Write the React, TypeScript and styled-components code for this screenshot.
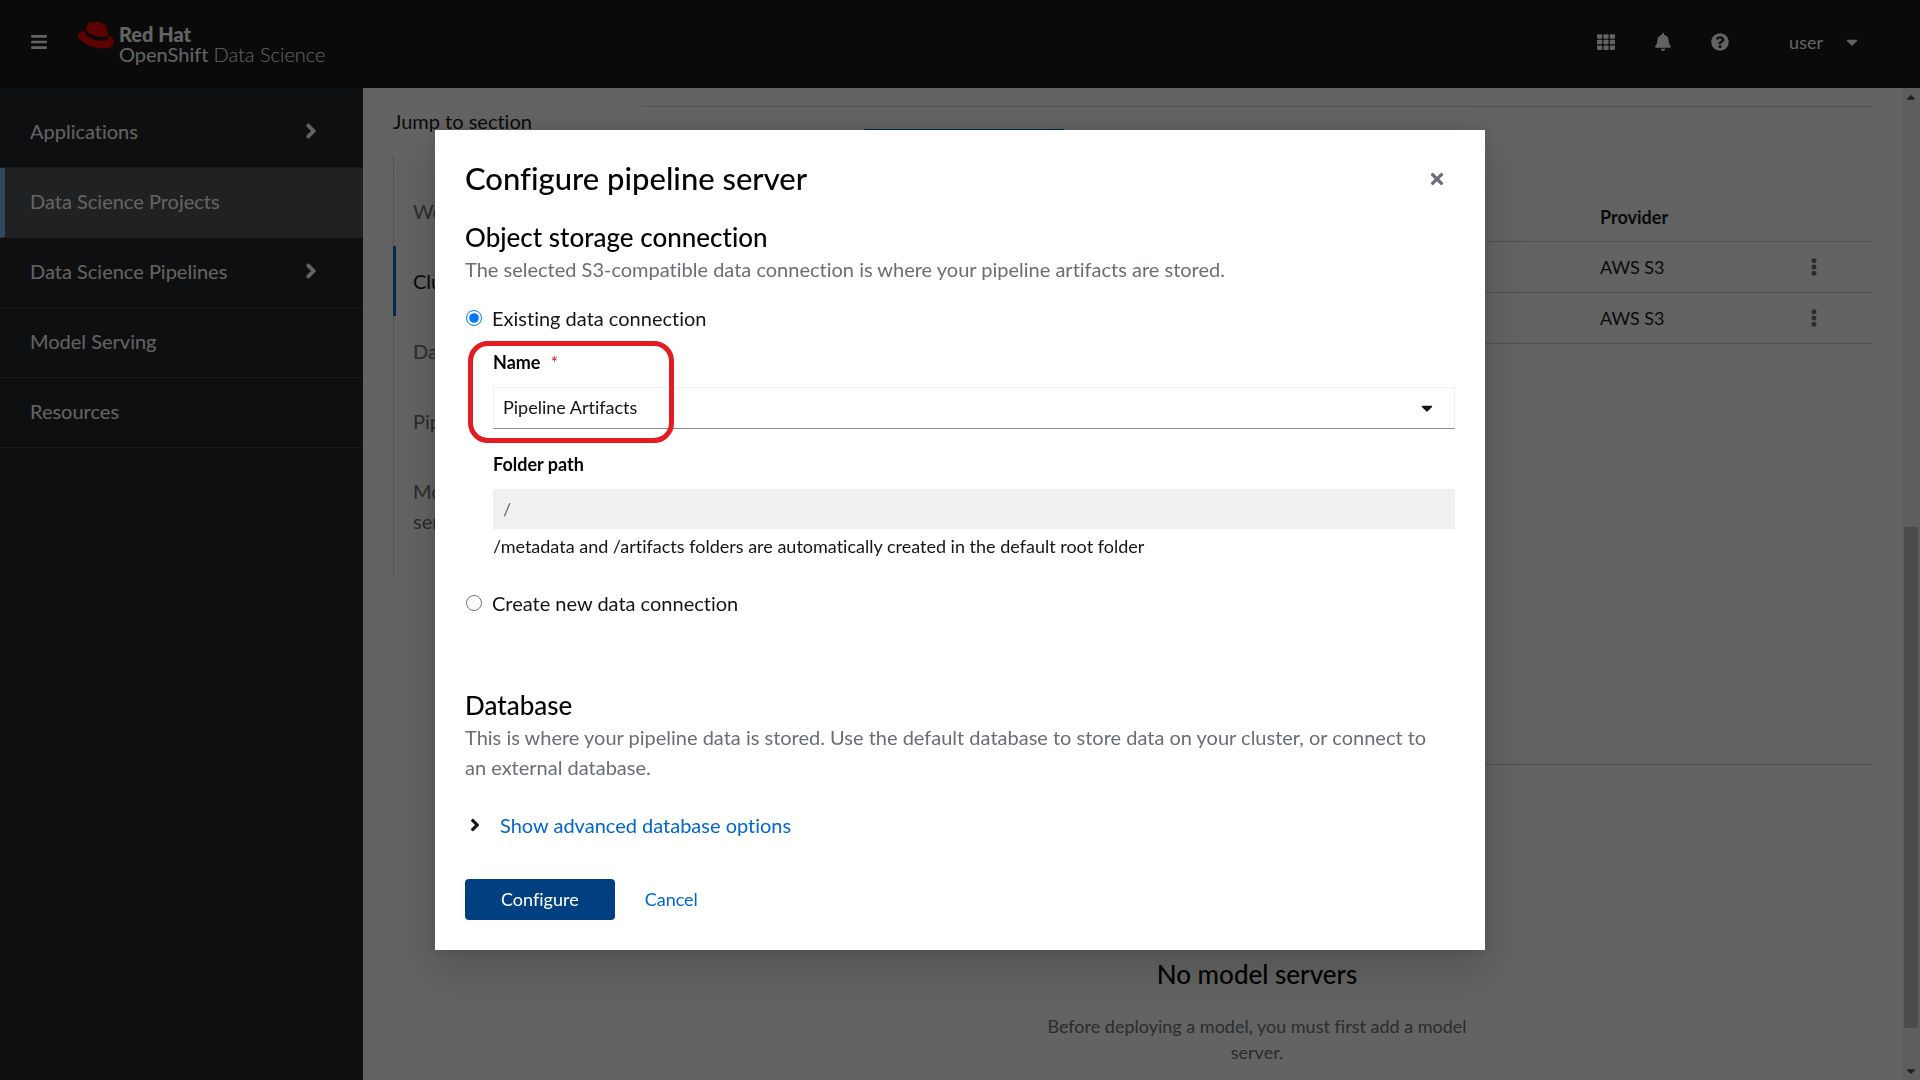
import React, { useState } from "react";
import styled, { createGlobalStyle } from "styled-components";
import {
  FaAngleRight,
  FaBars,
  FaBell,
  FaCaretDown,
  FaCaretUp,
  FaEllipsisV,
  FaQuestionCircle,
  FaRedhat,
  FaTh,
  FaTimes,
} from "react-icons/fa";

const color = {
  text: "#151515",
  heading: "#030303",
  muted: "#6a6e73",
  link: "#0066cc",
  primaryDark: "#004080",
  line: "#d2d2d2",
  masthead: "#151515",
  sidebar: "#212427",
  navLine: "#3c3f42",
  navCurrent: "#4f5255",
  danger: "#c9190b",
};

const GlobalStyle = createGlobalStyle`
  *, *::before, *::after { box-sizing: border-box; }
  body {
    margin: 0;
    overflow: hidden;
    background: #fff;
    color: ${color.text};
    font-family: Lato, "Liberation Sans", sans-serif;
    font-size: 20px;
    line-height: 30px;
    font-variant-ligatures: none;
  }
  h1, h2, h3, p, ul { margin: 0; padding: 0; }
  ul { list-style: none; }
  button, input, select { font: inherit; color: inherit; }
  button { border: 0; background: none; padding: 0; cursor: pointer; }
  svg { display: block; flex: none; }
`;

const Page = styled.div`
  display: flex;
  flex-direction: column;
  height: 100vh;
`;

/* ---------- Masthead ---------- */

const Masthead = styled.header`
  display: flex;
  align-items: center;
  flex: none;
  height: 88px;
  padding: 0 59px 4px 30px;
  background: ${color.masthead};
  color: #fff;
`;

const Brand = styled.a`
  display: flex;
  align-items: center;
  gap: 5px;
  margin-left: 30px;
  color: #fff;
  text-decoration: none;
  line-height: 20px;

  svg {
    color: #ee0000;
    margin-bottom: 15px;
  }
`;

const BrandText = styled.span`
  display: flex;
  flex-direction: column;
  padding-top: 3px;

  strong {
    font-weight: 900;
  }

  span span {
    font-weight: 300;
  }
`;

const Tools = styled.div`
  display: flex;
  align-items: center;
  gap: 39px;
  margin-left: auto;
`;

const UserMenu = styled.button`
  display: flex;
  align-items: center;
  gap: 20px;
  margin-left: 21px;
  font-size: 18px;
`;

/* ---------- Sidebar ---------- */

const Body = styled.div`
  display: flex;
  flex: 1;
  min-height: 0;
`;

const Sidebar = styled.nav`
  flex: none;
  width: 363px;
  padding-top: 10px;
  background: ${color.sidebar};
`;

const NavLink = styled.a<{ $current?: boolean }>`
  display: flex;
  align-items: center;
  justify-content: space-between;
  height: 70px;
  padding: 0 40px 4px ${(p) => (p.$current ? 25 : 30)}px;
  border-left: ${(p) => (p.$current ? "5px solid #73bcf7" : "0")};
  border-bottom: 1px solid ${(p) => (p.$current ? color.navCurrent : color.navLine)};
  background: ${(p) => (p.$current ? color.navCurrent : "transparent")};
  color: #fff;
  text-decoration: none;
`;

/* ---------- Project page ---------- */

const Main = styled.main`
  display: flex;
  flex: 1;
  gap: 30px;
  min-width: 0;
  padding: 18px 30px 0;
  overflow: hidden;
`;

const JumpLinks = styled.nav`
  flex: none;
  width: 219px;
`;

const JumpTitle = styled.div`
  margin-bottom: 20px;
`;

const JumpList = styled.ul`
  padding: 20px 0;
  box-shadow: inset 1px 0 ${color.line};
`;

const JumpLink = styled.a<{ $current?: boolean }>`
  display: block;
  padding: 20px 0 20px 17px;
  border-left: 3px solid ${(p) => (p.$current ? color.link : "transparent")};
  color: ${(p) => (p.$current ? color.text : color.muted)};
  text-decoration: none;
`;

const Sections = styled.div`
  flex: 1;
  min-width: 0;
`;

const Section = styled.section`
  padding-top: 22px;
  border-top: 1px solid ${color.line};
`;

const SectionHeader = styled.div`
  display: grid;
  grid-template-columns: 200px auto 1fr;
  gap: 20px;
  align-items: center;
  margin-bottom: 23px;
`;

const SectionTitle = styled.h2`
  color: ${color.heading};
  font-size: 26px;
  font-weight: 500;
  line-height: 33px;
`;

const Button = styled.button<{ $dark?: boolean }>`
  height: 41px;
  padding: 0 ${(p) => (p.$dark ? 36 : 20)}px 2px;
  border-radius: 4px;
  background: ${(p) => (p.$dark ? color.primaryDark : color.link)};
  color: #fff;
  font-size: 18px;
  line-height: 26px;
  white-space: nowrap;
`;

const DataTable = styled.table`
  width: 100%;
  table-layout: fixed;
  border-collapse: collapse;
  font-size: 18px;
  line-height: 26px;
  text-align: left;

  th,
  td {
    height: 51px;
    padding: 0 20px;
    border-bottom: 1px solid ${color.line};
  }

  thead th,
  thead td {
    height: 48px;
    font-weight: 700;
  }
`;

const ProviderHead = styled.th`
  width: 176px;
`;

const ActionHead = styled.td`
  width: 116px;
`;

const KebabButton = styled.button`
  display: flex;
  margin: 0 auto;
  color: ${color.muted};
`;

const Spacer = styled.div`
  height: 420px;
`;

const EmptyState = styled.div`
  display: flex;
  flex-direction: column;
  align-items: center;
  gap: 22px;
  padding-top: 171px;
  text-align: center;
`;

const EmptyText = styled.p`
  max-width: 440px;
  color: ${color.muted};
  font-size: 18px;
  line-height: 26px;
`;

/* ---------- Scroll bar ---------- */

const ScrollTrack = styled.div`
  display: grid;
  grid-template-rows: 18px 421fr 501fr 34fr 18px;
  justify-items: center;
  align-items: center;
  flex: none;
  width: 18px;
  background: #f1f1f1;
  color: #505050;
`;

const ScrollThumb = styled.div`
  grid-row: 3;
  align-self: stretch;
  width: 14px;
  background: #c1c1c1;
`;

const ScrollDown = styled.span`
  grid-row: 5;
`;

/* ---------- Modal ---------- */

const Backdrop = styled.div`
  position: fixed;
  inset: 0;
  display: grid;
  place-items: center;
  background: rgba(3, 3, 3, 0.62);
`;

const Dialog = styled.section`
  width: min(1050px, 100%);
  padding: 29px 30px 30px;
  background: #fff;
  box-shadow: 0 20px 40px rgba(3, 3, 3, 0.16), 0 0 10px rgba(3, 3, 3, 0.1);
`;

const DialogHeader = styled.div`
  display: flex;
  align-items: center;
  justify-content: space-between;
  margin-bottom: 23px;
`;

const DialogTitle = styled.h1`
  color: ${color.heading};
  font-size: 31px;
  font-weight: 500;
  line-height: 39px;
`;

const CloseButton = styled.button`
  padding: 9px;
  color: ${color.muted};
`;

const Description = styled.p`
  max-width: 974px;
  color: ${color.muted};
`;

const RadioLabel = styled.label`
  display: flex;
  align-items: center;
  gap: 10px;

  input {
    width: 16px;
    height: 16px;
    margin: 0 0 0 1px;
    accent-color: #0075ff;
  }
`;

const ConnectionGroup = styled.fieldset`
  min-width: 0;
  margin: 19px 0 71px;
  padding: 0;
  border: 0;
`;

const Fields = styled.div`
  display: flex;
  flex-direction: column;
  gap: 22px;
  margin: 16px 0 28px;
  padding-left: 28px;
`;

const Field = styled.div`
  position: relative;
  display: flex;
  flex-direction: column;
  font-size: 18px;
  line-height: 26px;
`;

const FieldLabel = styled.label`
  margin-bottom: 12px;
  color: ${color.heading};
  font-weight: 700;
`;

const Required = styled.span`
  margin-left: 10px;
  color: ${color.danger};
  font-weight: 400;
`;

const SelectBox = styled.div`
  display: grid;
  align-items: center;

  select,
  svg {
    grid-area: 1 / 1;
  }

  svg {
    justify-self: end;
    margin-right: 19px;
    pointer-events: none;
  }
`;

const Select = styled.select`
  appearance: none;
  width: 100%;
  height: 42px;
  padding: 0 40px 2px 9px;
  border: 1px solid #f0f0f0;
  border-bottom-color: #8a8d90;
  border-radius: 0;
  background: #fff;
`;

const TextInput = styled.input`
  height: 40px;
  padding: 0 10px;
  border: 0;
  background: #f0f0f0;
  color: ${color.muted};
`;

const Helper = styled.p`
  margin-top: 4px;
  padding-bottom: 1px;
`;

const Highlight = styled.div`
  position: absolute;
  top: -8px;
  left: -25px;
  width: 206px;
  height: 102px;
  border: 5px solid #e31b23;
  border-radius: 20px;
  pointer-events: none;
`;

const ExpandButton = styled.button`
  display: flex;
  align-items: center;
  gap: 15px;
  margin: 28px 0 39px;
  color: ${color.link};

  svg {
    color: ${color.text};
  }
`;

const Actions = styled.div`
  display: flex;
  gap: 30px;
`;

const LinkButton = styled.button`
  padding-bottom: 2px;
  color: ${color.link};
  font-size: 18px;
`;

const navItems = [
  { label: "Applications", expandable: true },
  { label: "Data Science Projects", current: true },
  { label: "Data Science Pipelines", expandable: true },
  { label: "Model Serving" },
  { label: "Resources" },
];

const jumpItems = [
  "Workbenches",
  "Cluster storage",
  "Data connections",
  "Pipelines",
  "Models and model servers",
];

const connections = ["My Storage", "Pipeline Artifacts"];

function AppMasthead() {
  return (
    <Masthead>
      <button aria-label="Global navigation">
        <FaBars size={18} />
      </button>
      <Brand href="#">
        <FaRedhat size={36} />
        <BrandText>
          <strong>Red Hat</strong>
          <span>
            OpenShift <span>Data Science</span>
          </span>
        </BrandText>
      </Brand>
      <Tools>
        <button aria-label="Applications">
          <FaTh size={18} />
        </button>
        <button aria-label="Notifications">
          <FaBell size={18} />
        </button>
        <button aria-label="Help">
          <FaQuestionCircle size={18} />
        </button>
        <UserMenu>
          user
          <FaCaretDown size={18} />
        </UserMenu>
      </Tools>
    </Masthead>
  );
}

function ProjectPage() {
  return (
    <Main>
      <JumpLinks aria-label="Jump to section">
        <JumpTitle>Jump to section</JumpTitle>
        <JumpList>
          {jumpItems.map((label) => (
            <li key={label}>
              <JumpLink href="#" $current={label === "Cluster storage"}>
                {label}
              </JumpLink>
            </li>
          ))}
        </JumpList>
      </JumpLinks>
      <Sections>
        <Section>
          <SectionHeader>
            <SectionTitle>Data connections</SectionTitle>
            <Button>Add data connection</Button>
          </SectionHeader>
          <DataTable>
            <thead>
              <tr>
                <th>Name</th>
                <ProviderHead>Provider</ProviderHead>
                <ActionHead />
              </tr>
            </thead>
            <tbody>
              {connections.map((name) => (
                <tr key={name}>
                  <td>{name}</td>
                  <td>AWS S3</td>
                  <td>
                    <KebabButton aria-label="Actions">
                      <FaEllipsisV size={18} />
                    </KebabButton>
                  </td>
                </tr>
              ))}
            </tbody>
          </DataTable>
        </Section>
        <Spacer />
        <Section>
          <EmptyState>
            <SectionTitle>No model servers</SectionTitle>
            <EmptyText>Before deploying a model, you must first add a model server.</EmptyText>
          </EmptyState>
        </Section>
      </Sections>
    </Main>
  );
}

function PipelineServerModal() {
  const [source, setSource] = useState("existing");
  return (
    <Backdrop>
      <Dialog role="dialog" aria-modal="true" aria-labelledby="modal-title">
        <DialogHeader>
          <DialogTitle id="modal-title">Configure pipeline server</DialogTitle>
          <CloseButton aria-label="Close">
            <FaTimes size={18} />
          </CloseButton>
        </DialogHeader>

        <SectionTitle>Object storage connection</SectionTitle>
        <Description>
          The selected S3-compatible data connection is where your pipeline artifacts are stored.
        </Description>

        <ConnectionGroup>
          <RadioLabel>
            <input
              type="radio"
              name="source"
              checked={source === "existing"}
              onChange={() => setSource("existing")}
            />
            Existing data connection
          </RadioLabel>
          <Fields>
            <Field>
              <FieldLabel htmlFor="connection">
                Name
                <Required>*</Required>
              </FieldLabel>
              <SelectBox>
                <Select id="connection" defaultValue="Pipeline Artifacts">
                  {connections.map((name) => (
                    <option key={name}>{name}</option>
                  ))}
                </Select>
                <FaCaretDown size={18} />
              </SelectBox>
              <Highlight />
            </Field>
            <Field>
              <FieldLabel htmlFor="folder">Folder path</FieldLabel>
              <TextInput id="folder" value="/" readOnly />
              <Helper>
                /metadata and /artifacts folders are automatically created in the default root folder
              </Helper>
            </Field>
          </Fields>
          <RadioLabel>
            <input
              type="radio"
              name="source"
              checked={source === "new"}
              onChange={() => setSource("new")}
            />
            Create new data connection
          </RadioLabel>
        </ConnectionGroup>

        <SectionTitle>Database</SectionTitle>
        <Description>
          This is where your pipeline data is stored. Use the default database to store data on your
          cluster, or connect to an external database.
        </Description>
        <ExpandButton aria-expanded={false}>
          <FaAngleRight size={20} />
          Show advanced database options
        </ExpandButton>

        <Actions>
          <Button $dark>Configure</Button>
          <LinkButton>Cancel</LinkButton>
        </Actions>
      </Dialog>
    </Backdrop>
  );
}

export default function App() {
  return (
    <>
      <GlobalStyle />
      <Page>
        <AppMasthead />
        <Body>
          <Sidebar aria-label="Global">
            {navItems.map((item) => (
              <NavLink key={item.label} href="#" $current={item.current}>
                {item.label}
                {item.expandable && <FaAngleRight size={24} />}
              </NavLink>
            ))}
          </Sidebar>
          <ProjectPage />
          <ScrollTrack aria-hidden="true">
            <FaCaretUp size={14} />
            <ScrollThumb />
            <ScrollDown>
              <FaCaretDown size={14} />
            </ScrollDown>
          </ScrollTrack>
        </Body>
      </Page>
      <PipelineServerModal />
    </>
  );
}
